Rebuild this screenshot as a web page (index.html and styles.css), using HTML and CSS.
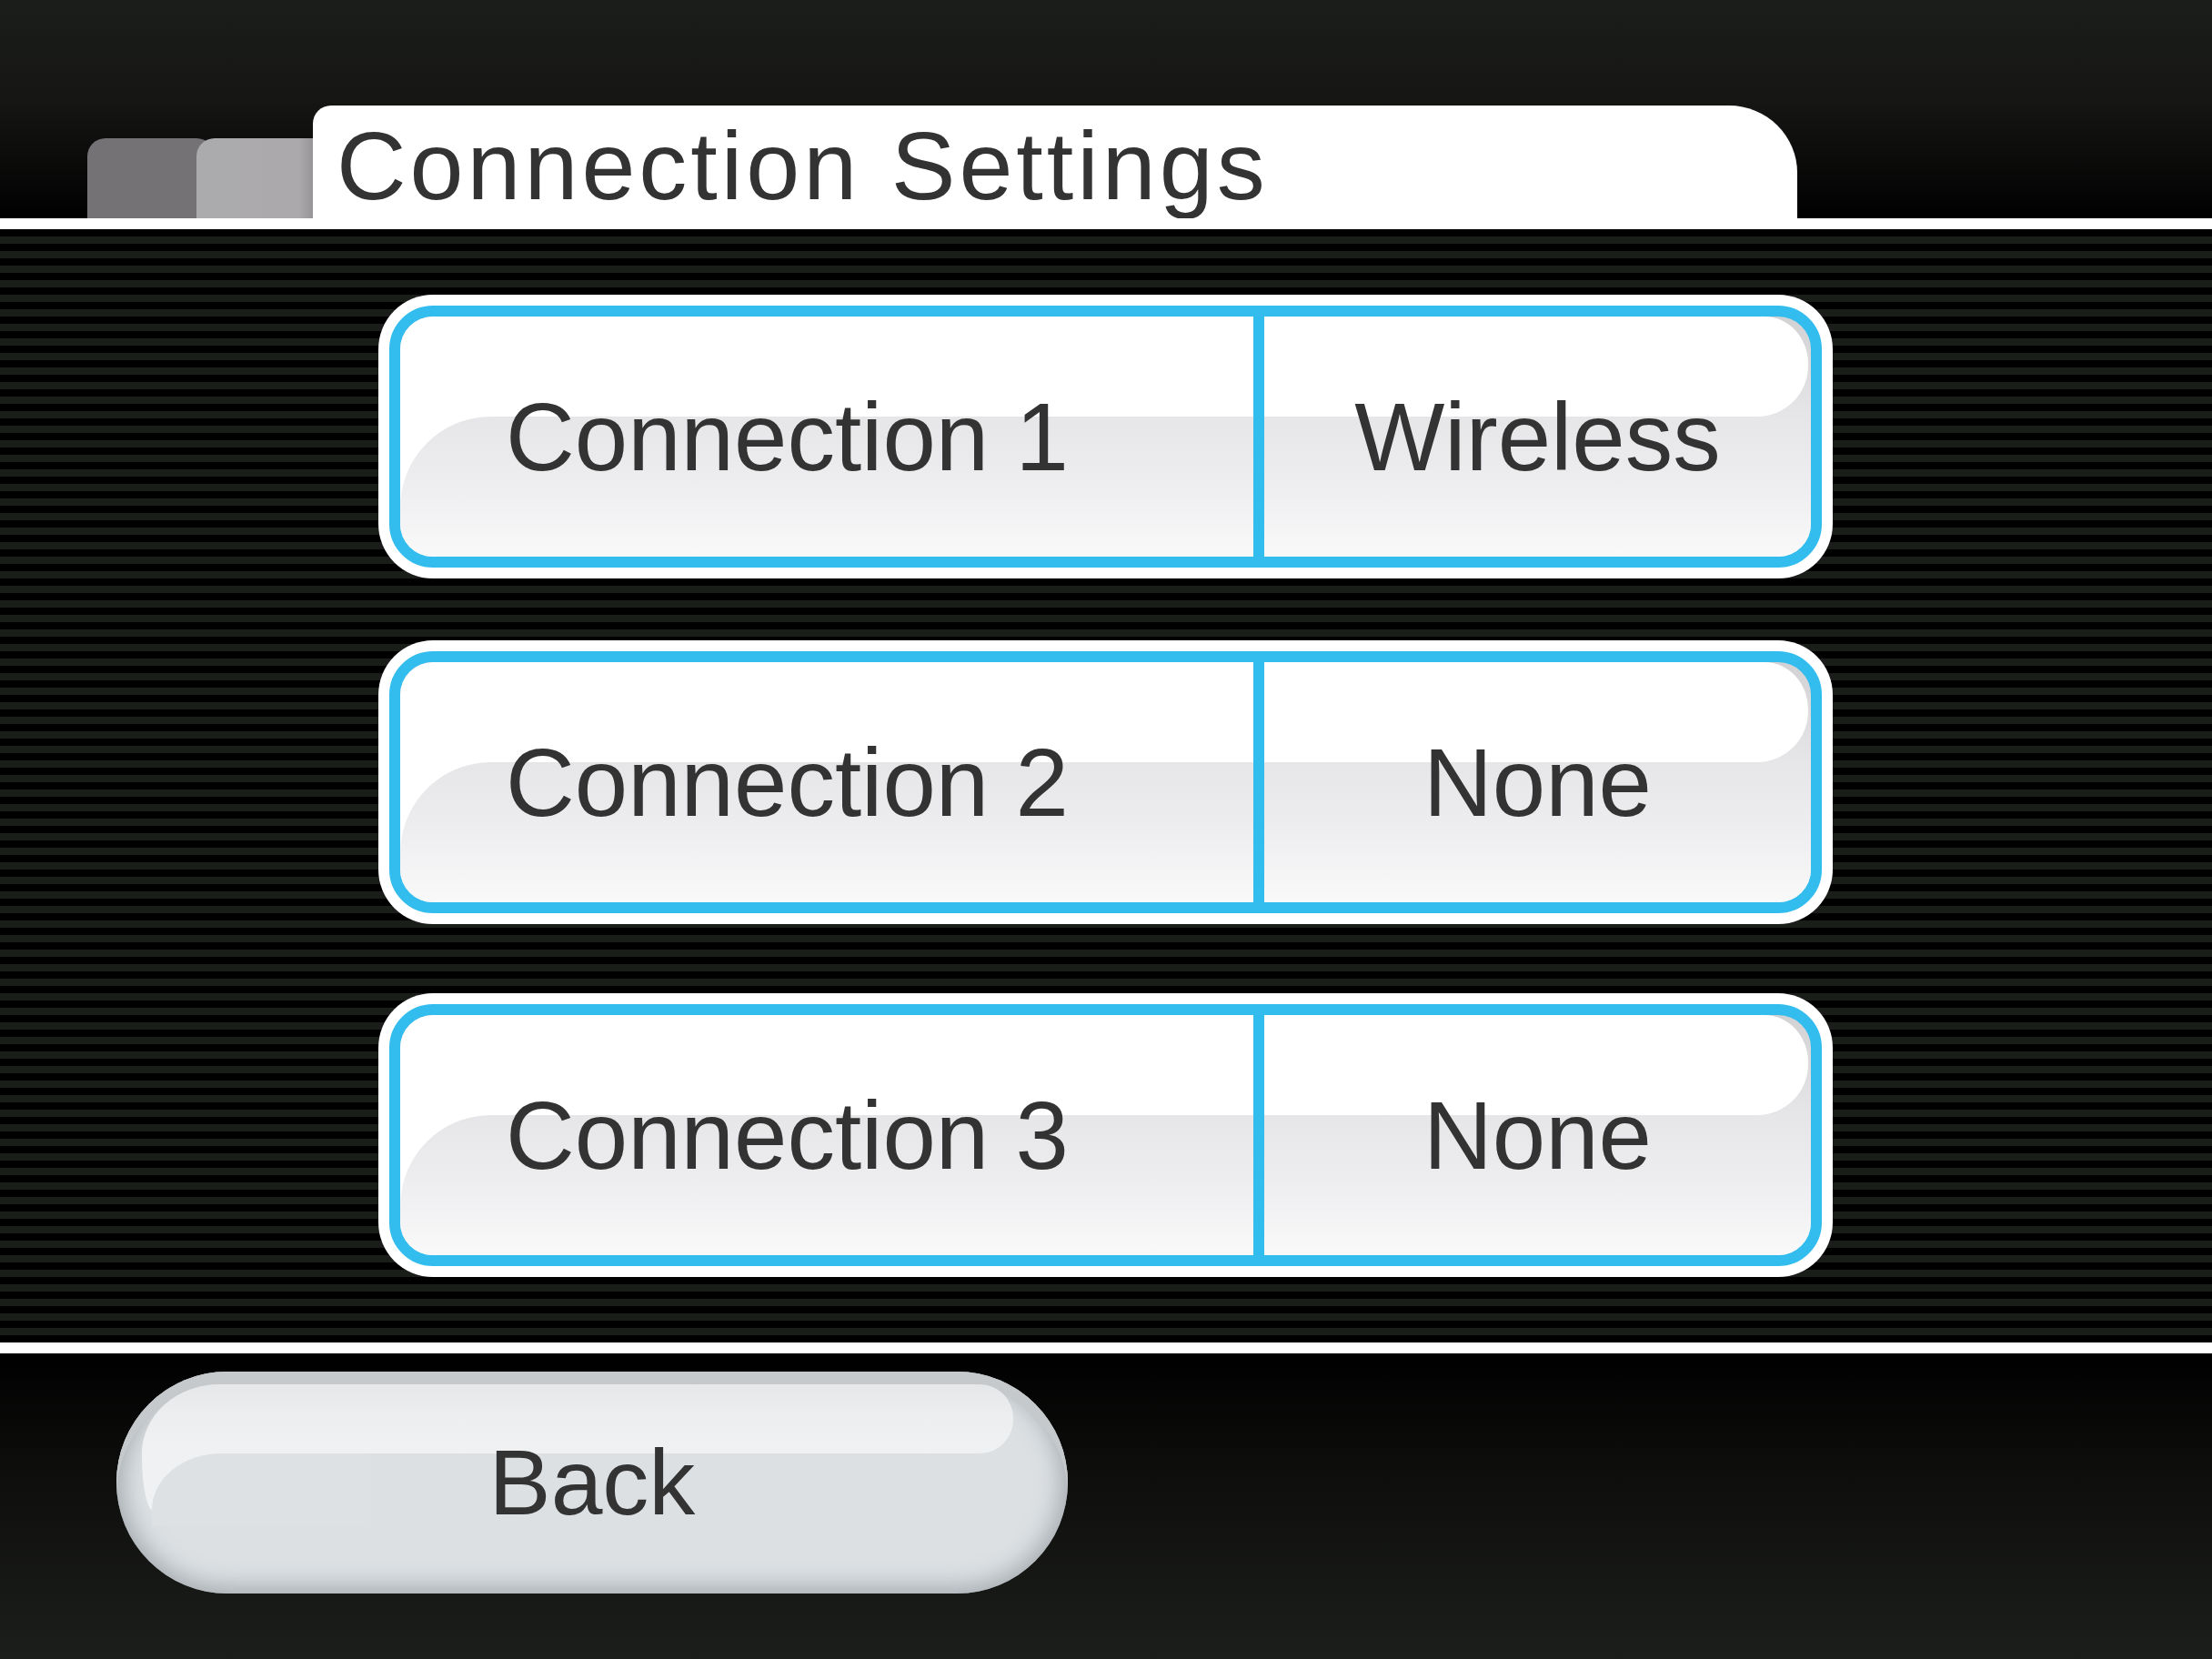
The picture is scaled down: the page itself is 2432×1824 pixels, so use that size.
FILE: index.html
```html
<!DOCTYPE html>
<html lang="en">
<head>
<meta charset="utf-8">
<title>Connection Settings</title>
<link rel="stylesheet" href="styles.css">
</head>
<body>
<div class="screen">
  <header class="topbar">
    <div class="tab tab-dark"></div>
    <div class="tab tab-light"></div>
    <div class="tab tab-main"><h1 class="title">Connection Settings</h1></div>
  </header>
  <div class="rule"></div>
  <main class="stripes">
    <ul class="list">
      <li class="row">
        <div class="row-frame">
          <div class="row-panel">
            <span class="gloss-band"></span><span class="gloss-fill"></span><span class="gloss-low"></span>
            <div class="cell cell-name">Connection 1</div>
            <div class="divider"></div>
            <div class="cell cell-value">Wireless</div>
          </div>
        </div>
      </li>
      <li class="row">
        <div class="row-frame">
          <div class="row-panel">
            <span class="gloss-band"></span><span class="gloss-fill"></span><span class="gloss-low"></span>
            <div class="cell cell-name">Connection 2</div>
            <div class="divider"></div>
            <div class="cell cell-value">None</div>
          </div>
        </div>
      </li>
      <li class="row">
        <div class="row-frame">
          <div class="row-panel">
            <span class="gloss-band"></span><span class="gloss-fill"></span><span class="gloss-low"></span>
            <div class="cell cell-name">Connection 3</div>
            <div class="divider"></div>
            <div class="cell cell-value">None</div>
          </div>
        </div>
      </li>
    </ul>
  </main>
  <div class="rule"></div>
  <footer class="bottombar">
    <button class="back"><span class="back-shine"></span><span class="back-label">Back</span></button>
  </footer>
</div>
</body>
</html>
```

FILE: styles.css
```css
html, body {
  margin: 0;
  padding: 0;
  background: #000;
}

.screen {
  width: 2432px;
  height: 1824px;
  display: flex;
  flex-direction: column;
  font-family: "Liberation Sans", Arial, sans-serif;
  color: #333333;
  overflow: hidden;
}

/* ---------- top bar with tabs ---------- */
.topbar {
  height: 240px;
  flex: none;
  display: flex;
  align-items: flex-end;
  padding-left: 96px;
  box-sizing: border-box;
  background: linear-gradient(#1b1d1a 0%, #161715 45%, #000 100%);
}

.tab {
  flex: none;
  border-radius: 20px 20px 0 0;
}

.tab-dark {
  width: 140px;
  height: 88px;
  background: #747275;
}

.tab-light {
  width: 148px;
  height: 88px;
  margin-left: -20px;
  background: linear-gradient(to right, #abaaad 0%, #aba9ac 76%, #908e91 90%, #7f7d80 100%);
}

.tab-main {
  width: 1632px;
  height: 124px;
  margin-left: -20px;
  background: #fff;
  border-radius: 20px 75px 0 0 / 20px 74px 0 0;
  display: flex;
  align-items: center;
  padding: 8px 0 0 26px;
  box-sizing: border-box;
}

.title {
  margin: 0;
  font-size: 106px;
  line-height: 1;
  font-weight: normal;
  letter-spacing: 4px;
  color: #333333;
  white-space: nowrap;
}

.rule {
  height: 12px;
  flex: none;
  background: #fff;
}

/* ---------- striped list area ---------- */
.stripes {
  height: 1224px;
  flex: none;
  background: repeating-linear-gradient(#000 0px, #000 8px, #1a1d1a 8px, #1a1d1a 16px);
  padding: 72px 0 0 416px;
  box-sizing: border-box;
}

.list {
  list-style: none;
  margin: 0;
  padding: 0;
  width: 1599px;
  display: flex;
  flex-direction: column;
  gap: 68px;
}

.row:nth-child(3) {
  margin-top: 8px;
}

.row-frame {
  background: #fff;
  border-radius: 60px;
  padding: 12px;
}

.row-panel {
  position: relative;
  height: 264px;
  border: 12px solid #33bdee;
  border-radius: 48px;
  overflow: hidden;
  display: grid;
  grid-template-columns: 938px 12px 1fr;
  background: linear-gradient(#d2d2d4 0px, #e6e5e8 110px, #f9f9fa 100%);
}

.gloss-band,
.gloss-fill,
.gloss-low {
  position: absolute;
  z-index: 0;
}

.gloss-band {
  top: 0;
  left: 0;
  right: 3px;
  height: 110px;
  background: #fff;
  border-radius: 0 48px 56px 0 / 0 52px 56px 0;
}

.gloss-fill {
  top: 100px;
  left: 0;
  width: 130px;
  height: 130px;
  background: #fff;
}

.gloss-low {
  top: 110px;
  left: 0;
  right: 0;
  bottom: 0;
  border-top-left-radius: 100px 100px;
  background: linear-gradient(#e6e5e8 0%, #ededef 45%, #f9f9fa 100%);
}

.cell {
  position: relative;
  z-index: 1;
  display: flex;
  align-items: center;
  font-size: 105px;
  line-height: 1;
  white-space: nowrap;
  color: #333333;
}

.cell-name {
  padding-left: 116px;
}

.cell-value {
  justify-content: center;
}

.divider {
  position: relative;
  z-index: 1;
  background: #33bdee;
}

/* ---------- bottom bar with Back button ---------- */
.bottombar {
  flex: 1;
  padding: 20px 0 0 128px;
  background: linear-gradient(#000 0%, #0e0f0d 40%, #1c1e1b 100%);
}

.back {
  position: relative;
  display: flex;
  align-items: center;
  justify-content: center;
  width: 1046px;
  height: 244px;
  padding: 0;
  border: none;
  border-radius: 122px;
  overflow: hidden;
  background: #dce0e3;
  box-shadow: inset 0 14px 0 0 #c6c9cc, inset 0 0 24px 8px rgba(150, 156, 162, 0.75);
  font-family: "Liberation Sans", Arial, sans-serif;
  font-size: 102px;
  line-height: 1;
  color: #333333;
  cursor: pointer;
}

.back::before {
  content: "";
  position: absolute;
  left: 28px;
  top: 14px;
  right: 60px;
  height: 76px;
  border-radius: 92px 40px 40px 0 / 82px 40px 40px 0;
  background: linear-gradient(#e6e7e9 0px, #edeef0 34px, #f0f1f2 76px);
}

.back-shine {
  position: absolute;
  left: 28px;
  top: 14px;
  width: 140px;
  height: 140px;
  border-radius: 92px 0 0 14px / 82px 0 0 64px;
  background: linear-gradient(#e6e7e9 0px, #edeef0 34px, #f0f1f2 76px, #f0f1f2 140px);
}

.back::after {
  content: "";
  position: absolute;
  left: 39px;
  top: 90px;
  width: 240px;
  height: 80px;
  border-top-left-radius: 76px 62px;
  background: #dde1e4;
}

.back-label {
  position: relative;
  z-index: 1;
}
```
